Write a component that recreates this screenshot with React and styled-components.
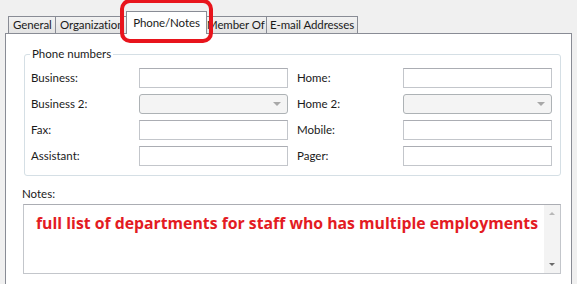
import React from 'react';
import styled, { createGlobalStyle } from 'styled-components';

const GlobalStyle = createGlobalStyle`
    html, body {
        margin: 0;
        padding: 0;
        background: #f0f0f0;
        font-family: Lato, "Noto Sans", sans-serif;
        font-size: 11.5px;
        color: #1a1a1a;
    }
`;

const Window = styled.div`
    position: relative;
    width: 577px;
    height: 284px;
    overflow: hidden;
    padding-top: 11px;
    box-sizing: border-box;
`;

const TabStrip = styled.div`
    display: flex;
    align-items: flex-end;
    height: 23px;
    padding-left: 8px;
    position: relative;
    z-index: 1;
`;

const Tab = styled.div`
    width: ${p => p.$w}px;
    height: ${p => (p.$active ? '23px' : '18px')};
    line-height: ${p => (p.$active ? '21px' : '16px')};
    margin: ${p => (p.$active ? '0 -2px' : '0')};
    padding-left: ${p => p.$pad || 0}px;
    border: 1px solid #898c95;
    border-bottom: ${p => (p.$active ? 'none' : '1px solid #898c95')};
    border-left: ${p => (p.$first || p.$active ? '1px solid #898c95' : 'none')};
    background: ${p => (p.$active ? '#fff' : 'linear-gradient(#f2f2f2, #e3e3e3)')};
    box-sizing: border-box;
    white-space: nowrap;
    letter-spacing: -0.1px;
    text-align: ${p => (p.$active ? 'center' : 'left')};
    position: relative;
    z-index: ${p => (p.$active ? 2 : 1)};
`;

const Panel = styled.div`
    margin: -1px 5px 0 5px;
    height: 260px;
    background: #fff;
    border: 1px solid #898c95;
    box-sizing: border-box;
    padding: 13px 10px 0 17px;
`;

const Group = styled.fieldset`
    margin: 0 0 0 1px;
    width: 537px;
    box-sizing: border-box;
    border: 1px solid #d5dfe5;
    border-radius: 3px;
    padding: 7px 8px 9px 6px;
`;

const Legend = styled.legend`
    padding: 0 2px;
    margin-left: -1px;
    line-height: 14px;
`;

const FieldGrid = styled.div`
    display: grid;
    grid-template-columns: 108px 149px 115px 149px;
    row-gap: 6px;
    grid-auto-rows: 20px;
    align-items: center;
`;

const Label = styled.span`
    padding-left: ${p => (p.$right ? '9px' : '0')};
    line-height: 20px;
`;

const TextBox = styled.div`
    height: 20px;
    box-sizing: border-box;
    border: 1px solid #c3c6cb;
    border-top-color: #abadb3;
    background: #fff;
`;

const Combo = styled.div`
    height: 20px;
    box-sizing: border-box;
    border: 1px solid #adb2b5;
    border-radius: 3px;
    background: #f4f4f4;
    display: flex;
    align-items: center;
    justify-content: flex-end;
    padding-right: 6px;
`;

const Arrow = styled.span`
    width: 0;
    height: 0;
    border-left: 4px solid transparent;
    border-right: 4px solid transparent;
    border-top: 4px solid #a8a8a8;
`;

const NotesLabel = styled.div`
    margin: 11px 0 3px -1px;
    line-height: 14px;
`;

const NotesBox = styled.div`
    width: 538px;
    height: 70px;
    box-sizing: border-box;
    border: 1px solid #c3c6cb;
    border-top-color: #abadb3;
    display: flex;
`;

const NotesText = styled.div`
    flex: 1;
    padding: 8px 0 0 12px;
    color: #e31b23;
    font-family: "Open Sans", "Liberation Sans", sans-serif;
    font-weight: 700;
    font-size: 15.8px;
    line-height: 20px;
    white-space: nowrap;
`;

const ScrollBar = styled.div`
    width: 16px;
    background: #f3f3f3;
    display: flex;
    flex-direction: column;
    justify-content: space-between;
    align-items: center;
    padding: 7px 0;
`;

const ScrollArrow = styled.span`
    width: 0;
    height: 0;
    border-left: 3px solid transparent;
    border-right: 3px solid transparent;
    ${p => (p.$up ? 'border-bottom: 3px solid #b8b8b8;' : 'border-top: 3px solid #6a6a6a;')}
`;

const Highlight = styled.div`
    position: absolute;
    left: 120px;
    top: -1px;
    width: 93px;
    height: 44px;
    border: 4px solid #e8141c;
    border-radius: 10px;
    box-sizing: border-box;
    z-index: 5;
    pointer-events: none;
`;

const tabs = [
    { name: 'General', w: 48, pad: 4 },
    { name: 'Organization', w: 72, pad: 4 },
    { name: 'Phone/Notes', w: 81, active: true },
    { name: 'Member Of', w: 62, pad: 2 },
    { name: 'E-mail Addresses', w: 91, pad: 3 }
];

const rows = [
    ['Business:', 'text', 'Home:', 'text'],
    ['Business 2:', 'combo', 'Home 2:', 'combo'],
    ['Fax:', 'text', 'Mobile:', 'text'],
    ['Assistant:', 'text', 'Pager:', 'text']
];

function Field({ kind }) {
    if (kind === 'combo') {
        return (
            <Combo>
                <Arrow />
            </Combo>
        );
    }
    return <TextBox />;
}

export default function App() {
    return (
        <Window>
            <GlobalStyle />
            <TabStrip>
                {tabs.map((t, i) => (
                    <Tab key={t.name} $w={t.w} $pad={t.pad} $first={i === 0} $active={t.active}>
                        {t.name}
                    </Tab>
                ))}
            </TabStrip>
            <Panel>
                <Group>
                    <Legend>Phone numbers</Legend>
                    <FieldGrid>
                        {rows.map(r => (
                            <React.Fragment key={r[0]}>
                                <Label>{r[0]}</Label>
                                <Field kind={r[1]} />
                                <Label $right>{r[2]}</Label>
                                <Field kind={r[3]} />
                            </React.Fragment>
                        ))}
                    </FieldGrid>
                </Group>
                <NotesLabel>Notes:</NotesLabel>
                <NotesBox>
                    <NotesText>
                        full list of departments for staff who has multiple employments
                    </NotesText>
                    <ScrollBar>
                        <ScrollArrow $up />
                        <ScrollArrow />
                    </ScrollBar>
                </NotesBox>
            </Panel>
            <Highlight />
        </Window>
    );
}
